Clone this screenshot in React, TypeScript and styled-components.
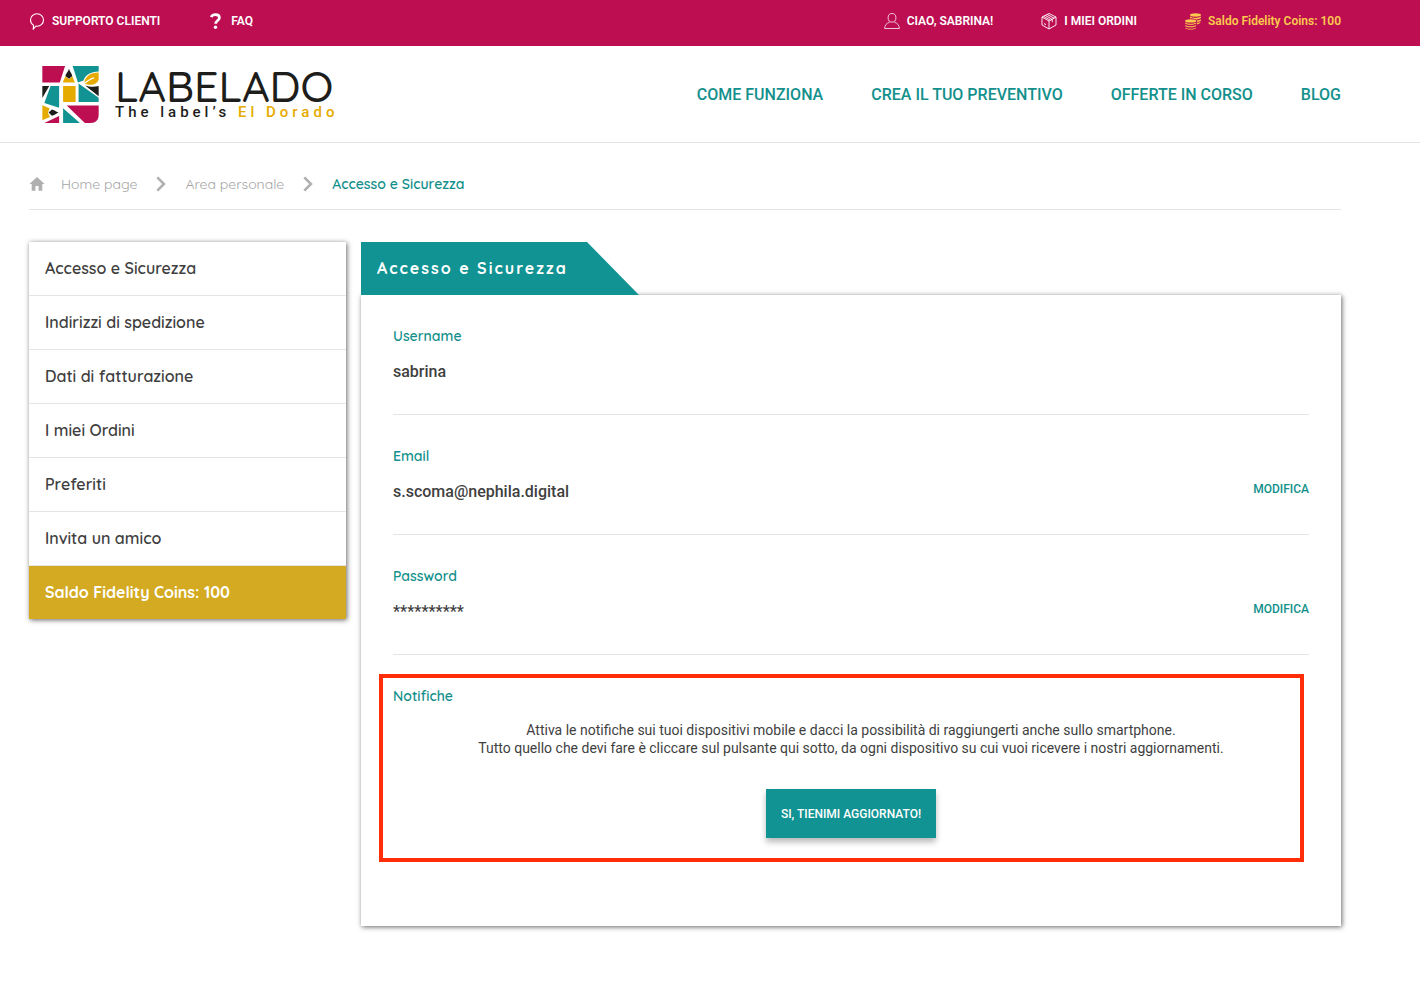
import React from "react";
import styled, { createGlobalStyle, css } from "styled-components";

const teal = "#119393";
const tealText = "#13908c";
const magenta = "#bc0e51";
const gold = "#d3aa22";
const line = "#e4e4e4";
const dark = "#3f3f3f";
const rounded = 'Quicksand, Lato, "Open Sans", sans-serif';

const GlobalStyle = createGlobalStyle`
  *, *::before, *::after { box-sizing: border-box; }
  body {
    margin: 0;
    background: #fff;
    color: ${dark};
    font-family: Roboto, "Liberation Sans", sans-serif;
  }
  a { color: inherit; text-decoration: none; }
  ul, ol, dl, dd, h1, h2, p { margin: 0; padding: 0; list-style: none; }
`;

const gutter = css`
  padding-left: 29px;
  padding-right: 79px;
`;

const TopBar = styled.div`
  ${gutter}
  display: flex;
  justify-content: space-between;
  height: 46px;
  padding-bottom: 4px;
  background: ${magenta};
`;

const TopGroup = styled.div`
  display: flex;
  align-items: center;
  gap: 48px;
`;

const TopLink = styled.a<{ $highlight?: boolean }>`
  display: flex;
  align-items: center;
  gap: 7px;
  font-size: 12px;
  line-height: 16px;
  font-weight: 600;
  color: ${(p) => (p.$highlight ? "#fcca4e" : "#fff")};

  svg { width: 16px; height: 18px; }
`;

const Header = styled.header`
  ${gutter}
  display: flex;
  align-items: center;
  justify-content: space-between;
  height: 97px;
  border-bottom: 1px solid ${line};
`;

const Brand = styled.a`
  display: flex;
  align-items: center;
  gap: 16px;
  padding-left: 13px;

  svg { width: 57px; height: 57px; }
`;

const BrandName = styled.div`
  font-family: ${rounded};
  font-size: 43px;
  line-height: 36px;
  font-weight: 500;
  color: #1d1d1b;
`;

const BrandTagline = styled.div`
  font-size: 15px;
  line-height: 16px;
  font-weight: 500;
  letter-spacing: 4px;
  color: #1d1d1b;

  span { color: #e5ab00; }
`;

const MainNav = styled.nav`
  display: flex;
  gap: 48px;
  padding-top: 2px;
  font-size: 16px;
  line-height: 20px;
  font-weight: 500;
  color: ${tealText};
`;

const Page = styled.main`
  ${gutter}
  padding-bottom: 67px;
`;

const Breadcrumb = styled.ol`
  display: flex;
  align-items: center;
  gap: 16px;
  height: 67px;
  padding-top: 16px;
  border-bottom: 1px solid ${line};
  font-family: ${rounded};
  font-size: 14px;
  line-height: 20px;
  font-weight: 400;
  color: #a4a4a4;

  svg { display: block; width: 16px; height: 16px; }
`;

const Current = styled.li`
  font-weight: 600;
  color: ${tealText};
`;

const Columns = styled.div`
  display: grid;
  grid-template-columns: 317px minmax(0, 1fr);
  gap: 15px;
  align-items: start;
  margin-top: 32px;
`;

const cardShadow = css`
  background: #fff;
  box-shadow: 1px 1px 5px rgba(0, 0, 0, 0.6);
`;

const SideMenu = styled.ul`
  ${cardShadow}
`;

const SideItem = styled.li<{ $coins?: boolean }>`
  font-family: ${rounded};
  font-size: 16px;
  line-height: 21px;
  font-weight: ${(p) => (p.$coins ? 700 : 600)};
  color: ${(p) => (p.$coins ? "#fff" : dark)};
  background: ${(p) => (p.$coins ? gold : "transparent")};

  &:not(:last-child) { border-bottom: 1px solid ${line}; }
  a { display: block; padding: 16px; }
`;

const PanelTitle = styled.h1`
  position: relative;
  z-index: 1;
  width: 278px;
  padding: 16px;
  clip-path: polygon(0 0, calc(100% - 52px) 0, 100% 100%, 0 100%);
  background: ${teal};
  font-family: ${rounded};
  font-size: 16px;
  line-height: 21px;
  font-weight: 700;
  letter-spacing: 2px;
  color: #fff;
`;

const PanelBody = styled.div`
  ${cardShadow}
  padding: 0 32px 56px;
`;

const Field = styled.section`
  min-height: 120px;
  padding-top: 32px;
  border-bottom: 1px solid ${line};
`;

const Label = styled.h2`
  margin-bottom: 16px;
  font-family: ${rounded};
  font-size: 14px;
  line-height: 18px;
  font-weight: 600;
  color: ${tealText};
`;

const ValueRow = styled.div`
  display: flex;
  justify-content: space-between;
  align-items: flex-start;
  font-size: 16px;
  line-height: 22px;
  font-weight: 500;
`;

const EditLink = styled.a`
  font-size: 12px;
  line-height: 16px;
  font-weight: 500;
  color: ${tealText};
`;

const Notifications = styled.section`
  position: relative;
  padding: 32px 0;
`;

const Highlight = styled.div`
  position: absolute;
  inset: 19px 5px 8px -14px;
  border: 4px solid #ff2d08;
  pointer-events: none;
`;

const Message = styled.p`
  margin-bottom: 32px;
  font-size: 14px;
  line-height: 18px;
  text-align: center;
`;

const Subscribe = styled.button`
  display: block;
  margin: 0 auto;
  padding: 17px 15px 16px;
  border: 0;
  background: ${teal};
  box-shadow: 0 4px 6px rgba(0, 0, 0, 0.28);
  font: 500 12px/16px Roboto, "Liberation Sans", sans-serif;
  color: #fff;
`;

const BubbleIcon = () => (
  <svg viewBox="0 0 16 18" fill="none" stroke="#fff" strokeWidth="1.1" aria-hidden="true">
    <path d="M4.500 13.200C2.500 12 1.500 10 1.500 8 1.500 4.500 4.400 1.800 8 1.800s6.500 2.700 6.500 6.200-2.900 6.200-6.300 6.200c-.9 0-1.300-.1-1.300-.1L4.300 17Z" />
  </svg>
);

const QuestionIcon = () => (
  <svg viewBox="0 0 16 18" fill="none" stroke="#fff" aria-hidden="true">
    <path d="M3.300 5.200C3.800 3.300 5.400 2.700 7.500 2.700c2.500 0 3.900 1.200 3.900 3.100 0 2.700-3.700 2.700-3.700 5.900" strokeWidth="2.700" />
    <circle cx="7.500" cy="15.300" r="1.700" fill="#fff" stroke="none" />
  </svg>
);

const PersonIcon = () => (
  <svg viewBox="0 0 16 18" fill="none" stroke="#f3c4d6" strokeWidth="1" aria-hidden="true">
    <ellipse cx="8" cy="5.800" rx="3.900" ry="4.300" />
    <path d="M5.600 10.200C2.500 11.200.800 13.200.600 16.500h14.800c-.2-3.300-1.900-5.300-5-6.300" />
  </svg>
);

const BoxIcon = () => (
  <svg viewBox="0 0 16 18" fill="none" stroke="#fff" strokeWidth=".9" strokeLinejoin="round" aria-hidden="true">
    <path d="M8 1.500 15 5v8l-7 4-7-4V5ZM1 5l7 4 7-4M8 9v8M4.300 3.400l7 4v2.800M6.200 2.500l7 3.700M2.600 4.300l7 4M3 11.500l2 1.200" />
  </svg>
);

const CoinsIcon = () => (
  <svg viewBox="0 0 16 18" aria-hidden="true">
    <g fill="#fcca4e">
      <ellipse cx="10.500" cy="3" rx="5.500" ry="1.700" />
      <path d="M5 4.600c2 1.700 9 1.700 11 0v1.100c-1 1.200-3 1.600-5.200 1.700C9.500 6.600 7 6.200 5 6.200ZM11.800 8.500c1.800-.2 3.300-.6 4.200-1.300v1.300c-1 1-2.500 1.400-4.200 1.500ZM11.800 11c1.500-.2 3-.6 3.800-1.200-.1 1.500-1.800 2.400-3.800 2.600Z" />
      <ellipse cx="5.600" cy="8.900" rx="5.500" ry="1.700" />
      <path d="M.1 10.500c2 1.700 9 1.700 11 0v1c-2 1.800-9 1.800-11 0ZM.1 13c2 1.700 9 1.700 11 0v1c-2 1.800-9 1.800-11 0ZM.1 15.400c2 1.700 9 1.700 11 0 0 2.700-11 2.700-11 0Z" />
    </g>
  </svg>
);

const HomeIcon = () => (
  <svg viewBox="0 0 16 16" fill="#b0b0b0" aria-hidden="true">
    <path d="M8 1 .4 8h2.300v6.800h3.700V10h3.200v4.800h3.700V8h2.300Z" />
  </svg>
);

const ChevronIcon = () => (
  <svg viewBox="0 0 16 16" fill="none" stroke="#b0b0b0" strokeWidth="2.600" aria-hidden="true">
    <path d="m4.300 1.400 6.600 6.600-6.600 6.600" />
  </svg>
);

const BrandMark = () => (
  <svg viewBox="12 9 171 173" aria-hidden="true">
    <path fill={magenta} d="M12 9h69L65 59H12ZM86 129h97v28c0 16-9 25-24 25h-18ZM18 182l45-21v21Z" />
    <path fill={teal} d="M104 9h79v17c-24 1-41 10-46 27l-17 6ZM37 70h26v66l-45-15ZM122 62l61 43v13h-61ZM75 137l51 45H75Z" />
    <path fill="#e5ab00" d="M74 59l8-19 11 9 10-9 8 19ZM75 70h38v48H75ZM139 61c4-21 18-32 44-32v22c-6 16-26 19-44 10ZM12 128l22 9-5 14 6 13-23 10Z" />
    <path fill="#1d1d1b" d="M93 17c2 9 9 15 10 22l-10 9-11-9c1-7 9-13 11-22ZM12 70h21l-21 36ZM142 68c13 5 28 5 41 2v31ZM31 150l10-9c7 1 12 6 20 9-8 4-13 9-20 10Z" />
    <path fill="none" stroke="#fff" strokeWidth="4" d="M138 63c12-10 20-15 31-18" />
  </svg>
);

const menu = [
  "Accesso e Sicurezza",
  "Indirizzi di spedizione",
  "Dati di fatturazione",
  "I miei Ordini",
  "Preferiti",
  "Invita un amico",
];

const fields = [
  { label: "Username", value: "sabrina", editable: false },
  { label: "Email", value: "s.scoma@nephila.digital", editable: true },
  { label: "Password", value: "**********", editable: true },
];

export default function App() {
  return (
    <>
      <GlobalStyle />
      <TopBar>
        <TopGroup>
          <TopLink href="#supporto"><BubbleIcon />SUPPORTO CLIENTI</TopLink>
          <TopLink href="#faq"><QuestionIcon />FAQ</TopLink>
        </TopGroup>
        <TopGroup>
          <TopLink href="#profilo"><PersonIcon />CIAO, SABRINA!</TopLink>
          <TopLink href="#ordini"><BoxIcon />I MIEI ORDINI</TopLink>
          <TopLink href="#coins" $highlight><CoinsIcon />Saldo Fidelity Coins: 100</TopLink>
        </TopGroup>
      </TopBar>

      <Header>
        <Brand href="#home">
          <BrandMark />
          <div>
            <BrandName>LABELADO</BrandName>
            <BrandTagline>The label’s <span>El Dorado</span></BrandTagline>
          </div>
        </Brand>
        <MainNav>
          <a href="#come-funziona">COME FUNZIONA</a>
          <a href="#preventivo">CREA IL TUO PREVENTIVO</a>
          <a href="#offerte">OFFERTE IN CORSO</a>
          <a href="#blog">BLOG</a>
        </MainNav>
      </Header>

      <Page>
        <Breadcrumb>
          <li><HomeIcon /></li>
          <li><a href="#home">Home page</a></li>
          <li><ChevronIcon /></li>
          <li><a href="#area">Area personale</a></li>
          <li><ChevronIcon /></li>
          <Current>Accesso e Sicurezza</Current>
        </Breadcrumb>

        <Columns>
          <SideMenu>
            {menu.map((item) => (
              <SideItem key={item}><a href="#menu">{item}</a></SideItem>
            ))}
            <SideItem $coins><a href="#coins">Saldo Fidelity Coins: 100</a></SideItem>
          </SideMenu>

          <div>
            <PanelTitle>Accesso e Sicurezza</PanelTitle>
            <PanelBody>
              {fields.map((f) => (
                <Field key={f.label}>
                  <Label>{f.label}</Label>
                  <ValueRow>
                    <span>{f.value}</span>
                    {f.editable && <EditLink href="#modifica">MODIFICA</EditLink>}
                  </ValueRow>
                </Field>
              ))}
              <Notifications>
                <Label>Notifiche</Label>
                <Message>
                  Attiva le notifiche sui tuoi dispositivi mobile e dacci la possibilità di raggiungerti anche sullo smartphone.
                  <br />
                  Tutto quello che devi fare è cliccare sul pulsante qui sotto, da ogni dispositivo su cui vuoi ricevere i nostri aggiornamenti.
                </Message>
                <Subscribe type="button">SI, TIENIMI AGGIORNATO!</Subscribe>
                <Highlight />
              </Notifications>
            </PanelBody>
          </div>
        </Columns>
      </Page>
    </>
  );
}
